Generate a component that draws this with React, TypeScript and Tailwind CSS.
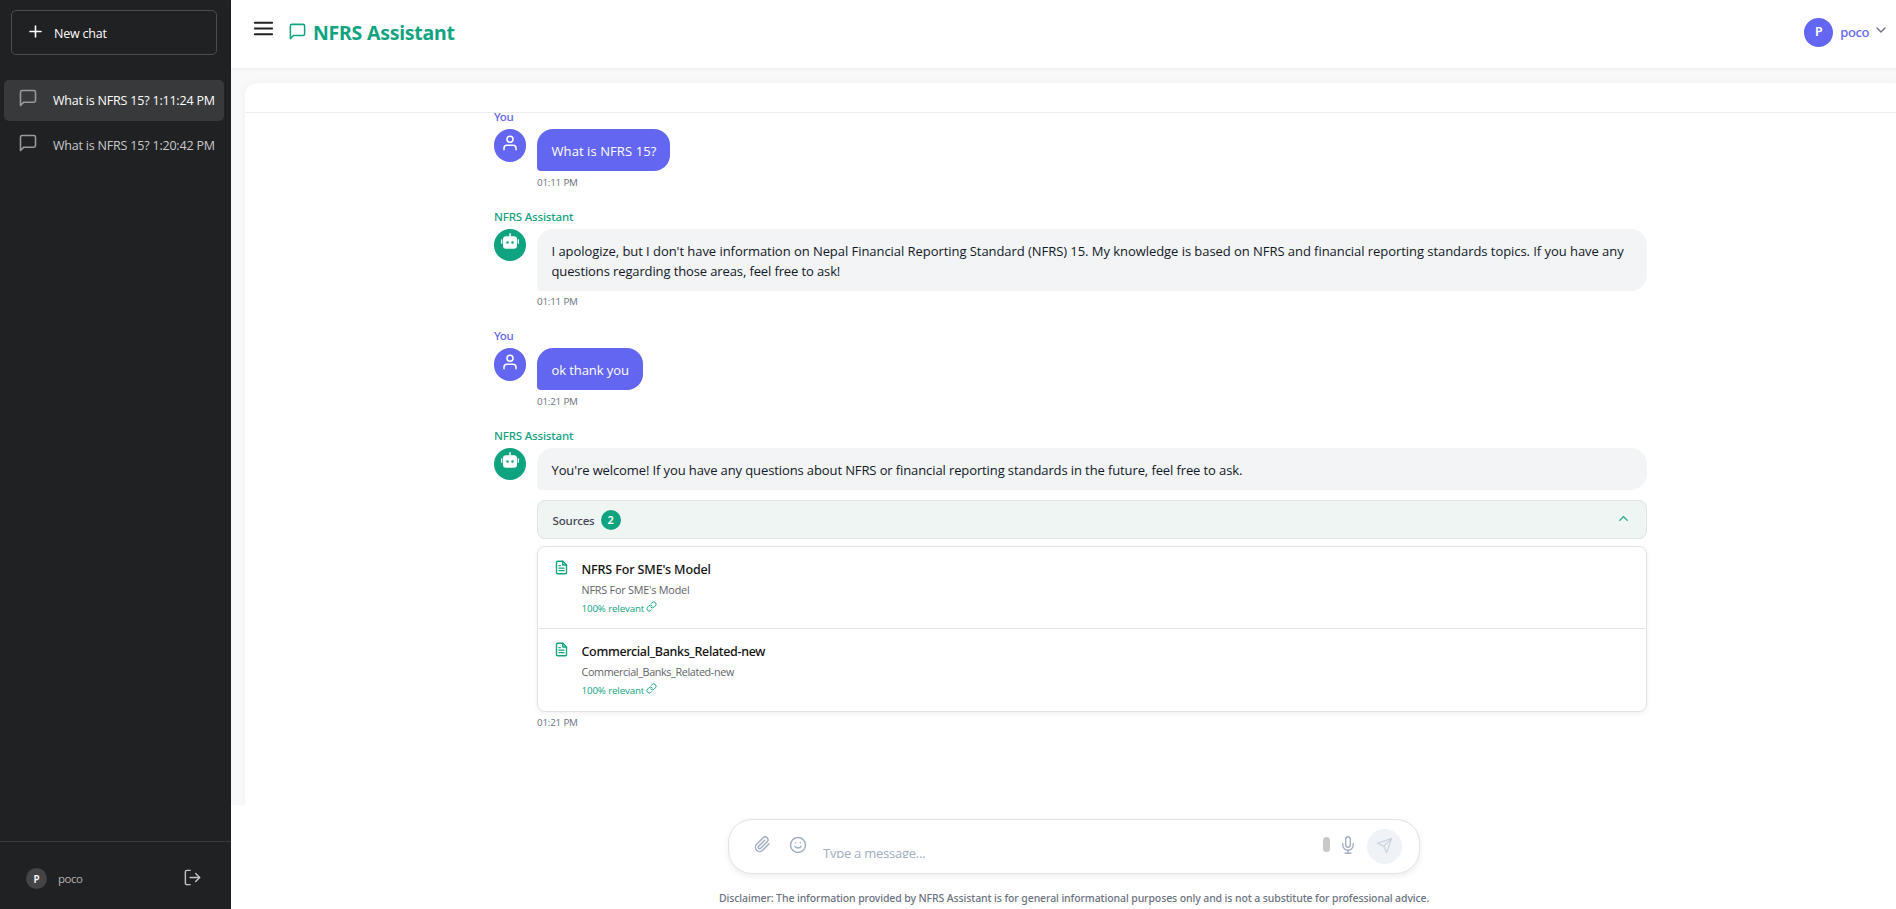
import type { ReactNode } from "react";
import {
  FiChevronDown,
  FiChevronUp,
  FiFileText,
  FiLink,
  FiLogOut,
  FiMenu,
  FiMessageSquare,
  FiMic,
  FiPaperclip,
  FiPlus,
  FiSend,
  FiSmile,
  FiUser,
} from "react-icons/fi";

function RobotIcon() {
  return (
    <svg width="18" height="17" viewBox="0 0 18 17" fill="currentColor">
      <rect x="8.3" y="0" width="1.5" height="4" rx="0.7" />
      <rect x="0" y="6.3" width="1.3" height="4.4" rx="0.5" />
      <rect x="16.7" y="6.3" width="1.3" height="4.4" rx="0.5" />
      <path
        fillRule="evenodd"
        d="M5 3.2h8a3 3 0 0 1 3 3v6.6a3 3 0 0 1-3 3H5a3 3 0 0 1-3-3V6.2a3 3 0 0 1 3-3Zm1.5 5a1.3 1.3 0 1 0 0 2.6a1.3 1.3 0 0 0 0-2.6Zm5 0a1.3 1.3 0 1 0 0 2.6a1.3 1.3 0 0 0 0-2.6Z"
      />
    </svg>
  );
}

function ChatItem({ title, active }: { title: string; active?: boolean }) {
  return (
    <div
      className={
        active
          ? "flex h-[41px] items-center rounded-[5px] bg-[#38393b] pl-[14px] text-white"
          : "flex h-[41px] items-center rounded-[5px] pl-[14px] text-[#c9c9cb]"
      }
    >
      <FiMessageSquare size={20} strokeWidth={1.9} className="mb-[6px] shrink-0 text-[#9a9a9c]" />
      <span className="mt-px ml-[15px] whitespace-nowrap text-[12.5px] leading-5 tracking-[-0.2px]">{title}</span>
    </div>
  );
}

type MessageProps = {
  from: "user" | "bot";
  time: string;
  tracking: string;
  spacing?: string;
  timeOffset?: string;
  text: ReactNode;
  children?: ReactNode;
};

function Message({ from, time, tracking, spacing = "mt-[16px]", timeOffset = "pt-px", text, children }: MessageProps) {
  const user = from === "user";
  return (
    <div className={spacing}>
      <div
        className={
          user
            ? "h-5 pt-px font-['Noto_Sans',sans-serif] text-[11.5px] font-medium leading-5 tracking-[-0.3px] text-[#6366f1]"
            : "h-5 pt-px font-['Noto_Sans',sans-serif] text-[11.5px] font-medium leading-5 tracking-[-0.17px] text-[#10a37f]"
        }
      >
        {user ? "You" : "NFRS Assistant"}
      </div>
      <div className="mt-[3px] flex items-start gap-[11px]">
        <div
          className={
            user
              ? "flex h-[33px] w-8 shrink-0 justify-center rounded-full bg-[#6366f1] pt-[5px] text-white"
              : "flex size-8 shrink-0 justify-center rounded-full bg-[#10a37f] pt-[4px] text-white"
          }
        >
          {user ? <FiUser size={18} strokeWidth={2} /> : <RobotIcon />}
        </div>
        <div className="flex min-w-0 flex-1 flex-col">
          <div
            className={`rounded-[16px] rounded-bl-[4px] pb-[10px] pl-[14.5px] pr-[14px] pt-[12px] text-[13px] leading-5 ${tracking} ${
              user ? "self-start bg-[#6366f1] text-white" : "bg-[#f3f4f6] text-[#111827]"
            }`}
          >
            {text}
          </div>
          {children}
          <div className={`mt-[3px] h-4 text-[9.8px] leading-4 tracking-[-0.19px] text-[#6b7280] ${timeOffset}`}>{time}</div>
        </div>
      </div>
    </div>
  );
}

function Source({ name, titleTracking, subTracking, height }: { name: string; titleTracking: string; subTracking: string; height: string }) {
  return (
    <div className={`flex items-start pl-[15.5px] ${height}`}>
      <FiFileText size={15} strokeWidth={2.2} className="mr-px mt-[12.5px] shrink-0 text-[#10a37f]" />
      <div className="ml-[12px] pt-[14px]">
        <div className={`font-['Noto_Sans',sans-serif] text-[12.5px] font-medium leading-[18px] text-[#111111] ${titleTracking}`}>{name}</div>
        <div className={`mt-[3px] text-[10.8px] leading-4 text-[#5f6368] ${subTracking}`}>{name}</div>
        <div className="mt-[3px] flex h-4 items-center text-[9.8px] leading-4 tracking-[-0.16px] text-[#10a37f]">
          100% relevant
          <FiLink size={11} className="mb-[6px] ml-[2px]" />
        </div>
      </div>
    </div>
  );
}

export default function App() {
  return (
    <div className="flex h-[909px] w-full overflow-hidden bg-white font-['Open_Sans','Noto_Sans',sans-serif]">
      <aside className="flex w-[231px] shrink-0 flex-col bg-[#202123]">
        <button className="mx-[11px] mt-[10px] flex h-[45px] w-[206px] items-center rounded-[5px] border border-[#4d4d4f] pl-[14px] text-white">
          <FiPlus size={19} strokeWidth={2} className="mb-[3px]" />
          <span className="ml-[9px] mt-[2px] text-[12.5px] leading-5 tracking-[-0.22px]">New chat</span>
        </button>
        <nav className="ml-1 mt-[25px] flex w-[220px] flex-col gap-1">
          <ChatItem title="What is NFRS 15? 1:11:24 PM" active />
          <ChatItem title="What is NFRS 15? 1:20:42 PM" />
        </nav>
        <div className="mt-auto flex h-[68px] items-center border-t border-[#38393b] pl-[26px] pr-[29px] pt-[6px]">
          <div className="flex size-[21px] items-center justify-center rounded-full bg-[#444446] pt-px font-['Noto_Sans',sans-serif] text-[10px] font-semibold text-white">
            P
          </div>
          <span className="ml-[11px] mt-px text-[11.5px] leading-4 tracking-[-0.5px] text-[#b4b4b6]">poco</span>
          <FiLogOut size={19} strokeWidth={1.8} className="mb-[3px] ml-auto text-[#c5c5c7]" />
        </div>
      </aside>

      <main className="flex min-w-0 flex-1 flex-col">
        <header className="z-10 flex h-[68px] shrink-0 items-center bg-white pl-[21px] pr-[7px] shadow-[0_1px_3px_rgba(0,0,0,0.06)]">
          <FiMenu size={23} strokeWidth={2} className="mb-[12px] text-[#202123]" />
          <FiMessageSquare size={19} strokeWidth={1.9} className="mb-[6px] ml-[13px] text-[#10a37f]" />
          <h1 className="mb-[2px] ml-[6px] font-['Noto_Sans',sans-serif] text-[19.5px] font-bold leading-[26px] tracking-[-0.25px] text-[#10a37f]">
            NFRS Assistant
          </h1>
          <div className="mb-[4px] ml-auto flex items-center">
            <div className="flex size-[29px] items-center justify-center rounded-full bg-[#6366f1] font-['Noto_Sans',sans-serif] text-[12.5px] font-semibold text-white">
              P
            </div>
            <span className="ml-[7px] font-['Noto_Sans',sans-serif] text-[13px] font-medium leading-5 tracking-[-0.42px] text-[#6366f1]">poco</span>
            <FiChevronDown size={16} className="mb-[4px] ml-[4px] text-[#6b7280]" />
          </div>
        </header>

        <div className="h-[737px] shrink-0 overflow-hidden bg-[#f9f9f9] pl-[14px] pt-[15px]">
          <section className="flex h-full flex-col rounded-tl-[12px] bg-white shadow-[0_0_10px_rgba(0,0,0,0.04)]">
            <div className="h-[30px] shrink-0 border-b border-[#ececec]" />
            <div className="min-h-0 flex-1 overflow-hidden">
              <div className="ml-[249px] w-[1153px]">
                <Message from="user" time="01:11 PM" spacing="-mt-[7px]" tracking="tracking-[0.08px]" text="What is NFRS 15?" />
                <Message
                  from="bot"
                  time="01:11 PM"
                  timeOffset="pt-0"
                  tracking="tracking-[-0.053px]"
                  text={
                    <>
                      I apologize, but I don't have information on Nepal Financial Reporting Standard (NFRS) 15. My knowledge is based on NFRS and financial reporting standards topics. If you have any
                      <br />
                      <span className="tracking-[-0.12px]">questions regarding those areas, feel free to ask!</span>
                    </>
                  }
                />
                <Message from="user" time="01:21 PM" spacing="mt-[15px]" tracking="tracking-[-0.09px]" text="ok thank you" />
                <Message
                  from="bot"
                  time="01:21 PM"
                  timeOffset="pt-0"
                  tracking="tracking-[-0.11px]"
                  text="You're welcome! If you have any questions about NFRS or financial reporting standards in the future, feel free to ask."
                >
                  <div className="mt-[10px] flex h-[39px] items-center rounded-[8px] border border-[#e0e3e8] bg-[#eff5f3] pl-[14.5px] pr-[15px]">
                    <span className="mt-[2px] font-['Noto_Sans',sans-serif] text-[11.5px] font-medium leading-4 tracking-[-0.14px] text-[#444654]">Sources</span>
                    <span className="ml-[6px] flex size-5 items-center justify-center rounded-full bg-[#10a37f] pt-px font-['Noto_Sans',sans-serif] text-[11px] font-semibold text-white">
                      2
                    </span>
                    <FiChevronUp size={15} className="mb-[3px] ml-auto text-[#10a37f]" />
                  </div>
                  <div className="mt-[7px] h-[166px] rounded-[8px] border border-[#e0e3e8] bg-white shadow-[0_2px_5px_rgba(0,0,0,0.06)]">
                    <Source name="NFRS For SME's Model" titleTracking="tracking-[-0.12px]" subTracking="tracking-[-0.2px]" height="h-[82px] border-b border-[#e0e3e8]" />
                    <Source name="Commercial_Banks_Related-new" titleTracking="tracking-[-0.33px]" subTracking="tracking-[-0.37px]" height="h-[82px]" />
                  </div>
                </Message>
              </div>
            </div>
          </section>
        </div>

        <footer className="flex flex-1 flex-col bg-white pt-[14px]">
          <div className="ml-[497px] flex h-[55px] w-[692px] items-center rounded-[24px] border border-[#e3e3e5] bg-white pl-[25px] pr-[17px] text-[#a0aec0] shadow-[0_2px_6px_rgba(0,0,0,0.08)]">
            <FiPaperclip size={17} className="mb-[4px]" />
            <FiSmile size={18} className="mb-[4px] ml-[18px]" />
            <div className="ml-[16px] mt-[11px] h-[11px] w-[500px] overflow-hidden">
              <div className="-mt-[4px] whitespace-nowrap text-[13px] leading-5 tracking-[-0.24px]">Type a message...</div>
            </div>
            <div className="mb-[4px] h-[15px] w-[7px] rounded-full bg-[#c8c8c8]" />
            <FiMic size={18} strokeWidth={1.8} className="mb-[4px] ml-[9px]" />
            <div className="ml-auto flex size-[35px] items-center justify-center rounded-full bg-[#eff2f7]">
              <FiSend size={17} strokeWidth={1.8} className="mb-[3px] text-[#cbd5e1]" />
            </div>
          </div>
          <p className="ml-[488px] mt-[14px] whitespace-nowrap font-['Noto_Sans',sans-serif] text-[10.5px] font-medium leading-5 tracking-[-0.11px] text-[#6b7280]">
            Disclaimer: The information provided by NFRS Assistant is for general informational purposes only and is not a substitute for professional advice.
          </p>
        </footer>
      </main>
    </div>
  );
}
